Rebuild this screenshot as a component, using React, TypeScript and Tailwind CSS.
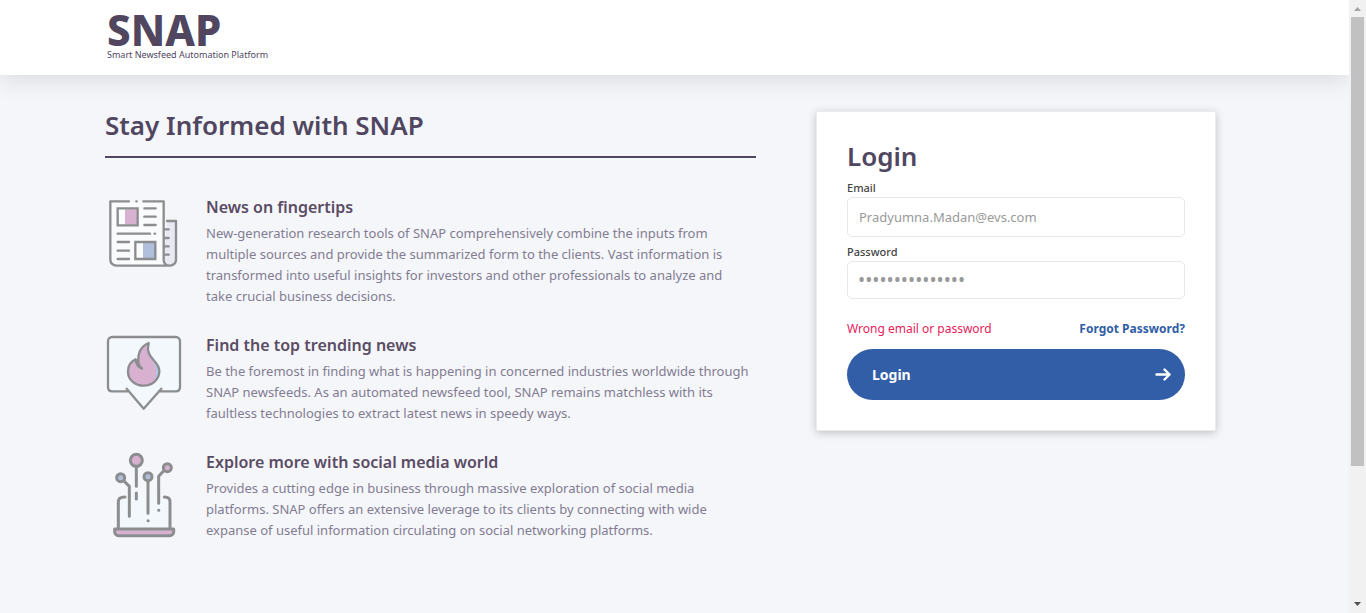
import type { ReactNode } from "react";

function NewsIcon() {
  return (
    <svg className="-mt-[5px] h-[90px] w-[100px]" viewBox="0 0 300 270" fill="none" stroke="#8b8d8e" strokeWidth="7" strokeLinecap="round" strokeLinejoin="round" aria-hidden="true">
      <path d="M216 93h27v118c0 24-37 24-37 0z" fill="#e9e9f4" stroke="none" />
      <path d="M46 34h160v176c0 9 5 17 16 17H64c-10 0-18-8-18-18z" fill="#fafbfd" stroke="none" />
      <path d="M102 34H46v175c0 10 8 18 18 18h161c10 0 18-8 18-18V93h-27M145 34h61v176c0 9 7 17 17 17M124 34h1" />
      <path d="M90 58h37v46H90z" fill="#d8b0d0" stroke="none" />
      <path d="M144 158h37v48h-37z" fill="#b0c0dc" stroke="none" />
      <path d="M68 55h60v51H68zM121 156h60v51h-60z" strokeLinejoin="miter" />
      <path d="M148 55h34M148 80h34M148 105h34M68 131h97M179 131h1M68 156h34M68 182h34M68 207h34M209 118h12M209 144h12M209 169h12M209 194h12" />
    </svg>
  );
}

function TrendIcon() {
  return (
    <svg className="-mt-2 h-[95px] w-[100px]" viewBox="0 0 300 285" fill="none" stroke="#8b8d8e" strokeWidth="7" strokeLinecap="round" strokeLinejoin="round" aria-hidden="true">
      <path d="M52 36h190c8 0 13 6 13 13v137c0 8-5 13-13 13h-49l-47 51-47-51H52c-8 0-13-5-13-13V49c0-7 5-13 13-13z" fill="#f3f8fd" stroke="none" />
      <path d="M99 199H52c-8 0-13-5-13-13V49c0-7 5-13 13-13h190c8 0 13 6 13 13v137c0 8-5 13-13 13h-49M95 191l51 60 53-60" />
      <path d="M161 54c-23 10-33 30-31 57-5-5-7-7-8-8-15 6-23 18-23 37 0 25 22 42 47 42s47-18 47-43c0-31-34-37-34-66 0-8 2-14 2-19z" fill="#d8b0d0" stroke="none" />
      <path d="M157 60c-9 30 27 47 27 79 0 16-5 28-14 37 14-6 23-20 23-37 0-31-34-37-34-66 0-8 2-14 2-19z" fill="#b0c8e6" stroke="none" />
      <path d="M161 54c-23 10-33 30-31 57 0 7 4 14 11 20-12-5-18-15-19-28-15 6-23 18-23 37 0 25 22 42 47 42s47-18 47-43c0-31-34-37-34-66 0-8 2-14 2-19z" />
    </svg>
  );
}

function SocialIcon() {
  return (
    <svg className="-mt-[5px] h-[100px] w-[100px]" viewBox="0 0 300 300" fill="none" stroke="#8b8d8e" strokeWidth="9" strokeLinecap="round" strokeLinejoin="round" aria-hidden="true">
      <path d="M70 250v-80c0-9 5-14 14-14h128c9 0 13 5 13 14v80z" fill="#f3f8fd" stroke="none" />
      <path d="M70 250v-80c0-9 7-14 20-14M208 156c12 0 17 5 17 14v80" />
      <path d="M59 252h177v8c0 7-5 12-12 12H71c-7 0-12-5-12-12z" fill="#d8b0d0" />
      <path d="M124 66v58M124 144v18M88 109l15 15v90M159 111v94M159 227h.5M205 79l-14 15v81M191 196h.5" />
      <circle cx="124" cy="46" r="18" fill="#d8b0d0" />
      <circle cx="77" cy="98" r="12" fill="#b0c0dc" />
      <circle cx="159" cy="95" r="12" fill="#b0c0dc" />
      <circle cx="217" cy="68" r="12" fill="#d8b0d0" />
    </svg>
  );
}

function Feature({ icon, title, lines }: { icon: ReactNode; title: string; lines: string[] }) {
  return (
    <li className="flex items-start">
      <div className="-mb-6 -ml-[10px] w-[111px] shrink-0">{icon}</div>
      <div>
        <h2 className="text-base leading-6 font-semibold text-[#5a4c64]">{title}</h2>
        <p className="pt-1 text-[13px] leading-[21px] text-[#837c91]">
          {lines.map((line) => (
            <span key={line} className="block whitespace-nowrap">{line} </span>
          ))}
        </p>
      </div>
    </li>
  );
}

function ScrollRail() {
  return (
    <div className="flex w-[17px] shrink-0 flex-col bg-[#f1f1f1]" aria-hidden="true">
      <svg className="h-[17px] w-[17px]" viewBox="0 0 17 17"><path d="M5 11l3.500-4 3.500 4z" fill="#a3a3a3" /></svg>
      <div className="mx-0.5 flex-[449] bg-[#c1c1c1]" />
      <div className="flex-[130]" />
      <svg className="h-[17px] w-[17px]" viewBox="0 0 17 17"><path d="M5 6h7l-3.500 4z" fill="#505050" /></svg>
    </div>
  );
}

export default function App() {
  return (
    <div className="flex h-screen bg-[#f4f6fa] font-['Noto_Sans',sans-serif]">
      <div className="flex min-w-0 flex-1 flex-col overflow-hidden">
        <header className="h-[75px] shrink-0 bg-white px-[107px] pt-3 text-[#50465f] shadow-[0_4px_24px_rgba(0,0,0,0.12)]">
          <a href="#home" className="block w-fit">
            <span className="block text-[42px] leading-9 font-extrabold">SNAP</span>
            <span className="block text-[9px] leading-[14px]">Smart Newsfeed Automation Platform</span>
          </a>
        </header>
        <main className="flex items-start justify-between gap-[60px] pt-9 pr-[133px] pl-[105px]">
          <section className="min-w-0 flex-1">
            <h1 className="border-b-2 border-[#50465f] pb-[17px] text-[26px] leading-7 font-semibold text-[#50465f]">Stay Informed with SNAP</h1>
            <ul className="flex flex-col gap-[26px] pt-[37px]">
              <Feature
                icon={<NewsIcon />}
                title="News on fingertips"
                lines={[
                  "New-generation research tools of SNAP comprehensively combine the inputs from",
                  "multiple sources and provide the summarized form to the clients. Vast information is",
                  "transformed into useful insights for investors and other professionals to analyze and",
                  "take crucial business decisions.",
                ]}
              />
              <Feature
                icon={<TrendIcon />}
                title="Find the top trending news"
                lines={[
                  "Be the foremost in finding what is happening in concerned industries worldwide through",
                  "SNAP newsfeeds. As an automated newsfeed tool, SNAP remains matchless with its",
                  "faultless technologies to extract latest news in speedy ways.",
                ]}
              />
              <Feature
                icon={<SocialIcon />}
                title="Explore more with social media world"
                lines={[
                  "Provides a cutting edge in business through massive exploration of social media",
                  "platforms. SNAP offers an extensive leverage to its clients by connecting with wide",
                  "expanse of useful information circulating on social networking platforms.",
                ]}
              />
            </ul>
          </section>
          <form className="w-[400px] shrink-0 rounded-xs border border-[#ececee] bg-white px-[30px] py-[30px] shadow-[0_2px_8px_rgba(0,0,0,0.22)]" onSubmit={(e) => e.preventDefault()}>
            <h2 className="text-[26px] leading-7 font-semibold text-[#50465f]">Login</h2>
            <label htmlFor="email" className="block pt-[10px] text-[11px] leading-4 font-medium text-[#444]">Email</label>
            <input id="email" type="email" defaultValue="Pradyumna.Madan@evs.com" className="mt-px block h-10 w-full rounded-[5px] border border-[#e8e8e8] px-[11px] text-[13px] text-[#999] outline-none" />
            <label htmlFor="password" className="block pt-[7px] pb-px text-[11px] leading-4 font-medium text-[#444]">Password</label>
            <input id="password" type="password" defaultValue="abcdefghijklmno" className="block h-[38px] w-full rounded-[5px] border border-[#e8e8e8] px-[10px] text-[19px] text-[#999] outline-none" />
            <div className="flex items-center justify-between pt-5 text-xs leading-5">
              <span role="alert" className="text-[#e81c5a]">Wrong email or password</span>
              <a href="#forgot" className="font-bold text-[#315ea6]">Forgot Password?</a>
            </div>
            <button type="submit" className="mt-[10px] flex h-[51px] w-full items-center justify-between rounded-full bg-[#315ea6] pr-[14px] pl-[25px] text-sm font-bold text-white">
              Login
              <svg className="h-4 w-4" viewBox="0 0 16 16" fill="none" stroke="currentColor" strokeWidth="2.400" strokeLinecap="round" strokeLinejoin="round" aria-hidden="true"><path d="M1.500 7.500h13M9.500 2.500l5 5-5 5" /></svg>
            </button>
          </form>
        </main>
      </div>
      <ScrollRail />
    </div>
  );
}
